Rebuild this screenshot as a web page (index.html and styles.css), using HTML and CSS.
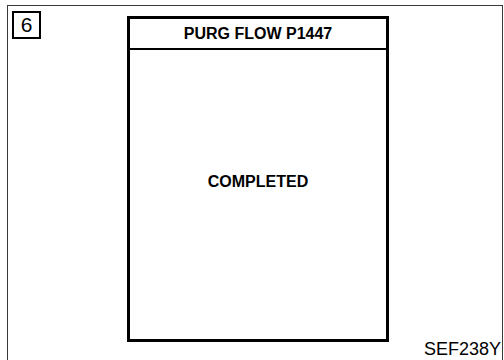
FILE: index.html
```html
<!DOCTYPE html>
<html>
<head>
<meta charset="utf-8">
<link rel="stylesheet" href="styles.css">
</head>
<body>
<div class="frame">
  <div class="badge">6</div>
  <div class="screen">
    <div class="screen-head">PURG FLOW P1447</div>
    <div class="screen-body">COMPLETED</div>
  </div>
  <div class="code">SEF238Y</div>
</div>
</body>
</html>
```
FILE: styles.css
```css
html, body {
  margin: 0;
  padding: 0;
  background: #fff;
}
body {
  width: 504px;
  height: 360px;
  overflow: hidden;
  font-family: "Liberation Sans", Arial, sans-serif;
  color: #000;
}
.frame {
  box-sizing: border-box;
  margin: 5px 1px 0 7px;
  height: 355px;
  border: 1px solid #3a3a3a;
  border-bottom: none;
  padding: 5px 0 0 4px;
  display: flex;
  align-items: flex-start;
}
.badge {
  box-sizing: border-box;
  width: 29px;
  height: 28px;
  border: 2px solid #000;
  font-size: 21px;
  line-height: 24px;
  text-align: center;
}
.screen {
  box-sizing: border-box;
  width: 262px;
  height: 326px;
  margin: 5px 0 0 86px;
  border: 3px solid #000;
}
.screen-head {
  height: 29px;
  border-bottom: 2px solid #000;
  font-weight: bold;
  font-size: 16px;
  line-height: 30px;
  text-align: center;
}
.screen-body {
  padding-top: 123px;
  font-weight: bold;
  font-size: 16px;
  line-height: 18px;
  text-align: center;
}
.code {
  align-self: flex-end;
  margin-left: auto;
  margin-right: 1px;
  font-size: 18px;
  line-height: 20px;
  margin-bottom: 1px;
}
```
